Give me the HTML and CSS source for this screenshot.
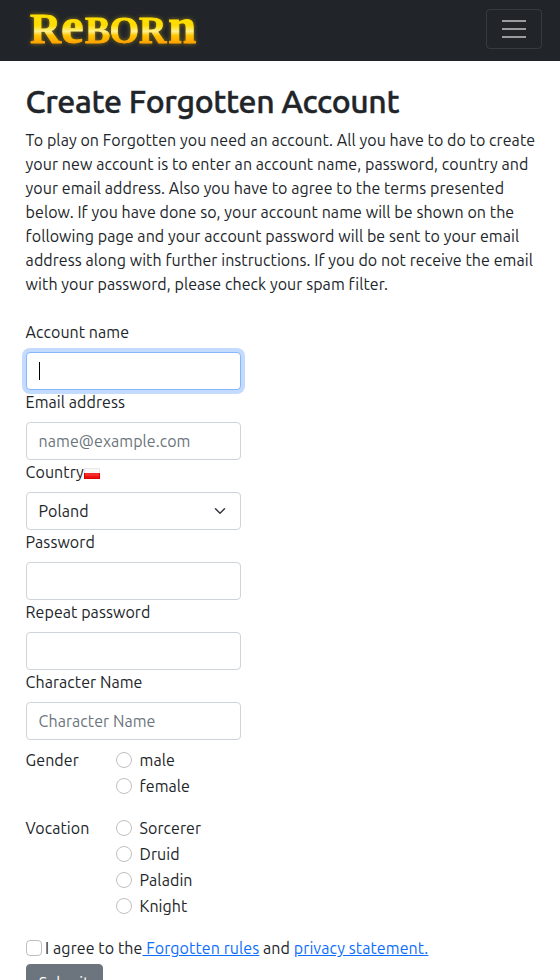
FILE: index.html
```
<!DOCTYPE html>
<html lang="en">
<head>
<meta charset="utf-8">
<title>Create Forgotten Account</title>
<link rel="stylesheet" href="styles.css">
</head>
<body>
<nav class="navbar">
  <a class="brand" aria-label="Reborn">
    <svg width="180" height="45" viewBox="0 0 180 45">
      <defs><linearGradient id="gold" gradientUnits="userSpaceOnUse" x1="0" y1="6" x2="0" y2="36"><stop offset="0" stop-color="#ffe000"/><stop offset=".38" stop-color="#ffdc00"/><stop offset=".58" stop-color="#fff08a"/><stop offset=".72" stop-color="#ffc400"/><stop offset="1" stop-color="#ff9d00"/></linearGradient></defs>
      <text class="wordmark" y="34.5" fill="url(#gold)" stroke="url(#gold)"><tspan class="initial" x="5">R</tspan><tspan class="uncial" x="36">e</tspan><tspan x="60">B</tspan><tspan x="84.5">O</tspan><tspan x="114">R</tspan><tspan class="uncial" x="143">n</tspan></text>
    </svg>
  </a>
  <button class="toggler" aria-label="Menu"><svg width="30" height="30" viewBox="0 0 30 30"><path stroke="rgba(255,255,255,.55)" stroke-miterlimit="10" stroke-width="2" stroke-linecap="butt" d="M3 7h24M3 15h24M3 23h24"/></svg></button>
</nav>
<main class="content">
  <h1>Create Forgotten Account</h1>
  <p class="intro">To play on Forgotten you need an account. All you have to do to create your new account is to enter an account name, password, country and your email address. Also you have to agree to the terms presented below. If you have done so, your account name will be shown on the following page and your account password will be sent to your email address along with further instructions. If you do not receive the email with your password, please check your spam filter.</p>
  <form>
    <div class="field"><label>Account name</label><div class="control focused"><i class="caret"></i></div></div>
    <div class="field"><label>Email address</label><div class="control placeholder">name@example.com</div></div>
    <div class="field"><label>Country</label><svg class="flag" width="16" height="11" viewBox="0 0 16 11"><path fill="#e9e9e9" d="M0 0h16v5H0z"/><path fill="#f8f8f8" d="M1 1h14v4H1z"/><path fill="#d80000" d="M0 5h16v6H0z"/><path fill="#f52a2a" d="M1 5h14v3H1z"/><path fill="#ef1010" d="M1 8h14v2H1z"/></svg>
      <div class="control select"><span>Poland</span><svg width="16" height="12" viewBox="0 0 16 16"><path fill="none" stroke="#343a40" stroke-linecap="round" stroke-linejoin="round" stroke-width="2" d="m2 5 6 6 6-6"/></svg></div></div>
    <div class="field"><label>Password</label><div class="control"></div></div>
    <div class="field"><label>Repeat password</label><div class="control"></div></div>
    <div class="field"><label>Character Name</label><div class="control placeholder">Character Name</div></div>
    <div class="choices">
      <span>Gender</span>
      <div class="options"><label><i></i>male</label><label><i></i>female</label></div>
    </div>
    <div class="choices vocation">
      <span>Vocation</span>
      <div class="options"><label><i></i>Sorcerer</label><label><i></i>Druid</label><label><i></i>Paladin</label><label><i></i>Knight</label></div>
    </div>
    <div class="agree"><i class="check"></i><span>I agree to the<a> Forgotten rules</a> and <a>privacy statement.</a></span></div>
    <button class="submit" type="button">Submit</button>
  </form>
</main>
</body>
</html>
```
FILE: styles.css
```
* { box-sizing: border-box; }
html { overflow: hidden; }
body { margin: 0; height: 980px; overflow: hidden; background: #fff; color: #212529; font: 16px/24px Ubuntu, "Noto Sans", sans-serif; letter-spacing: .066px; }
.navbar { height: 61px; background: #212529; display: flex; align-items: flex-start; justify-content: space-between; padding: 8px 18px 0 25px; }
.brand { display: block; height: 45px; }
.brand svg { display: block; overflow: visible; }
.wordmark { font: bold 38px "Liberation Serif", serif; letter-spacing: 0; stroke-width: .8px; filter: drop-shadow(0 0 2px rgba(255,200,0,.5)); }
.initial { font-size: 43px; }
.uncial { font-size: 51px; }
.toggler { width: 56px; height: 40px; margin-top: 1px; padding: 4px 12px; border: 1px solid rgba(255,255,255,.1); border-radius: 4px; background: none; }
.toggler svg { display: block; }
.content { padding: 22px 22px 0 25.6px; }
h1 { margin: 0 0 7px; font-size: 32px; line-height: 37px; padding-bottom: 1px; font-weight: 500; letter-spacing: -.34px; -webkit-text-stroke: .45px #212529; }
.intro { margin: 0 0 24px; }
.field { height: 70px; }
.field label { display: inline-block; height: 24px; margin-bottom: 8px; vertical-align: top; }
.flag { vertical-align: top; margin-top: 8px; }
.control { width: 215px; height: 38px; border: 1px solid #ced4da; border-radius: 4px; padding: 6px 12px; background: #fff; }
.focused { border-color: #86b7fe; box-shadow: 0 0 0 4px rgba(13,110,253,.25); }
.caret { display: block; width: 1px; height: 18px; margin-top: 3px; background: #000; }
.placeholder { color: #6c757d; }
.select { display: flex; align-items: center; justify-content: space-between; }
.choices { display: flex; margin-top: 8px; }
.choices > span { width: 90px; }
.options label { display: flex; height: 26px; }
.options i, .check { flex: none; width: 16px; height: 16px; margin: 4px 8px 0 0; border: 1px solid #bfbfbf; border-radius: 50%; }
.vocation { margin-top: 16px; }
.agree { display: flex; margin-top: 16px; white-space: pre; letter-spacing: .09px; }
.check { margin-right: 3.5px; border-radius: 4px; }
a { color: #0d6efd; text-decoration: underline; }
.submit { width: 77px; height: 38px; margin-top: 4px; padding: 6px 0; border: 1px solid #6c757d; border-radius: 4px; background: #6c757d; color: #fff; font: inherit; }
```
